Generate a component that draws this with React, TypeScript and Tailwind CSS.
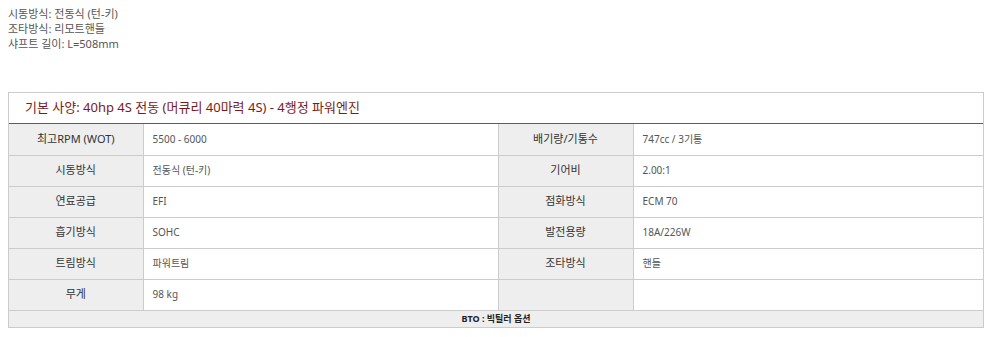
const font = '[font-family:"Noto_Sans","Noto_Sans_CJK_KR",sans-serif]';

const rows: [string, string, string, string][] = [
  ['최고RPM (WOT)', '5500 - 6000', '배기량/기통수', '747cc / 3기통'],
  ['시동방식', '전동식 (턴-키)', '기어비', '2.00:1'],
  ['연료공급', 'EFI', '점화방식', 'ECM 70'],
  ['흡기방식', 'SOHC', '발전용량', '18A/226W'],
  ['트림방식', '파워트림', '조타방식', '핸들'],
  ['무게', '98 kg', '', ''],
];

export default function App() {
  return (
    <div className={`${font} bg-white w-[991px] h-[337px] overflow-hidden`}>
      <div className="pt-[6px] pl-2 text-[11px] leading-[15px] text-[#555]">
        <p>시동방식: 전동식 (턴-키)</p>
        <p>조타방식: 리모트핸들</p>
        <p>샤프트 길이: L=508mm</p>
      </div>

      <div className="mx-2 mt-[41px] w-[976px] border border-[#cccccc]">
        <div className="h-[31px] flex items-center pl-[16px] text-[13px] text-[#7a1b1b] border-b border-[#cc3300]">
          기본 사양: 40hp 4S 전동 (머큐리 40마력 4S) - 4행정 파워엔진
        </div>
        <table className="w-full border-collapse table-fixed text-[10px]">
          <colgroup>
            <col className="w-[134px]" />
            <col className="w-[355px]" />
            <col className="w-[135px]" />
            <col />
          </colgroup>
          <tbody>
            {rows.map((r, i) => (
              <tr key={i} className="h-[31px]">
                <td className={`bg-[#eeeeee] text-center text-[#333] text-[11px] border-r border-[#cccccc] ${i > 0 ? 'border-t' : ''}`}>{r[0]}</td>
                <td className={`pl-[9px] text-[#555] border-r border-[#cccccc] ${i > 0 ? 'border-t' : ''}`}>{r[1]}</td>
                <td className={`bg-[#eeeeee] text-center text-[#333] text-[11px] border-r border-[#cccccc] ${i > 0 ? 'border-t' : ''}`}>{r[2]}</td>
                <td className={`pl-[9px] text-[#555] border-[#cccccc] ${i > 0 ? 'border-t' : ''}`}>{r[3]}</td>
              </tr>
            ))}
            <tr className="h-[17px]">
              <td colSpan={4} className="bg-[#eeeeee] text-center font-bold text-[9px] text-[#222] border-t border-[#cccccc]">
                BTO : 빅틸러 옵션
              </td>
            </tr>
          </tbody>
        </table>
      </div>
    </div>
  );
}
